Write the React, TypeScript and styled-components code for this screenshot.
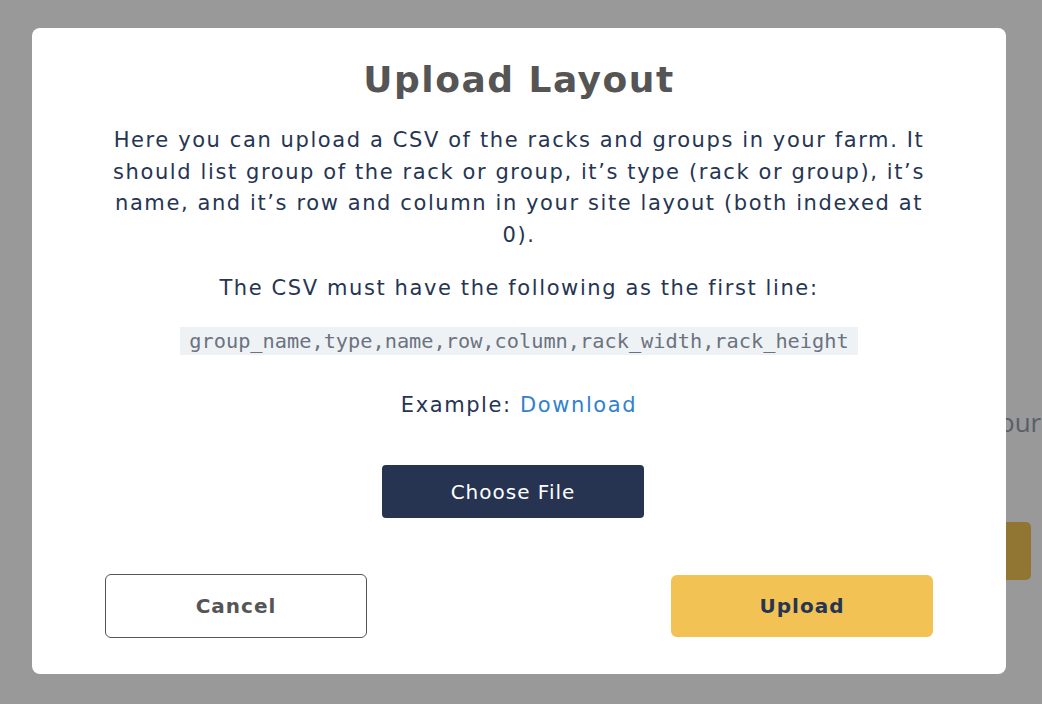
import React from "react";
import styled, { createGlobalStyle } from "styled-components";

const GlobalStyle = createGlobalStyle`
  html, body {
    margin: 0;
    padding: 0;
    width: 100%;
    height: 100%;
    overflow: hidden;
    background: #ffffff;
    font-family: "DejaVu Sans", "Open Sans", sans-serif;
  }
`;

const Page = styled.div`
  width: 1042px;
  height: 704px;
  overflow: hidden;
  display: flex;
  flex-direction: column;
  padding: 405px 0 0 999px;
  box-sizing: border-box;
  gap: 82px;
`;

const PageTitle = styled.div`
  font-family: "Open Sans", sans-serif;
  font-size: 26px;
  line-height: 35px;
  color: #969eaa;
  white-space: nowrap;
`;

const PageButton = styled.div`
  width: 32px;
  height: 58px;
  border-radius: 5px;
  background: #f2c354;
`;

const Overlay = styled.div`
  position: fixed;
  inset: 0;
  background: rgba(0, 0, 0, 0.4);
  display: flex;
  justify-content: flex-start;
  padding: 28px 0 0 32px;
  box-sizing: border-box;
`;

const Modal = styled.div`
  width: 974px;
  height: 646px;
  box-sizing: border-box;
  background: #ffffff;
  border-radius: 8px;
  padding: 22px 73px 36px;
  display: flex;
  flex-direction: column;
  align-items: center;
  text-align: center;
  color: #253553;
`;

const Title = styled.h1`
  margin: 0;
  font-size: 36px;
  font-weight: 700;
  letter-spacing: 1.5px;
  color: #555555;
  line-height: 60px;
`;

const Text = styled.p<{ $gap?: number }>`
  margin: ${({ $gap }) => $gap ?? 0}px 0 0;
  font-size: 21px;
  letter-spacing: 1.6px;
  line-height: 31.5px;
`;

const Code = styled.code`
  margin-top: 22px;
  display: inline-block;
  background: #eef2f5;
  color: #6b7280;
  font-family: "DejaVu Sans Mono", "Liberation Mono", monospace;
  font-size: 20.3px;
  line-height: 28px;
  padding: 0 9px;
`;

const Link = styled.a`
  color: #3182ce;
  text-decoration: none;
`;

const ChooseButton = styled.button`
  margin: 44px 12px 0 0;
  width: 262px;
  height: 53px;
  border: none;
  border-radius: 4px;
  background: #263452;
  color: #ffffff;
  font-family: inherit;
  font-size: 20px;
  letter-spacing: 1px;
`;

const Footer = styled.div`
  margin-top: auto;
  width: 100%;
  display: flex;
  justify-content: space-between;
  align-items: center;
`;

const FooterButton = styled.button<{ $primary?: boolean }>`
  width: 262px;
  height: ${({ $primary }) => ($primary ? "62px" : "64px")};
  border-radius: 6px;
  border: ${({ $primary }) => ($primary ? "none" : "1px solid #555555")};
  background: ${({ $primary }) => ($primary ? "#f2c354" : "#ffffff")};
  color: ${({ $primary }) => ($primary ? "#253553" : "#555555")};
  font-family: inherit;
  font-size: 20px;
  font-weight: 700;
  letter-spacing: 1px;
`;

const App: React.FC = () => {
  return (
    <>
      <GlobalStyle />
      <Page>
        <PageTitle>our farm</PageTitle>
        <PageButton />
      </Page>
      <Overlay>
        <Modal>
          <Title>Upload Layout</Title>
          <Text $gap={15}>
            Here you can upload a CSV of the racks and groups in your farm. It
            should list group of the rack or group, it’s type (rack or group),
            it’s name, and it’s row and column in your site layout (both
            indexed at 0).
          </Text>
          <Text $gap={22}>
            The CSV must have the following as the first line:
          </Text>
          <Code>group_name,type,name,row,column,rack_width,rack_height</Code>
          <Text $gap={35}>
            Example: <Link href="#">Download</Link>
          </Text>
          <ChooseButton>Choose File</ChooseButton>
          <Footer>
            <FooterButton>Cancel</FooterButton>
            <FooterButton $primary>Upload</FooterButton>
          </Footer>
        </Modal>
      </Overlay>
    </>
  );
};

export default App;
